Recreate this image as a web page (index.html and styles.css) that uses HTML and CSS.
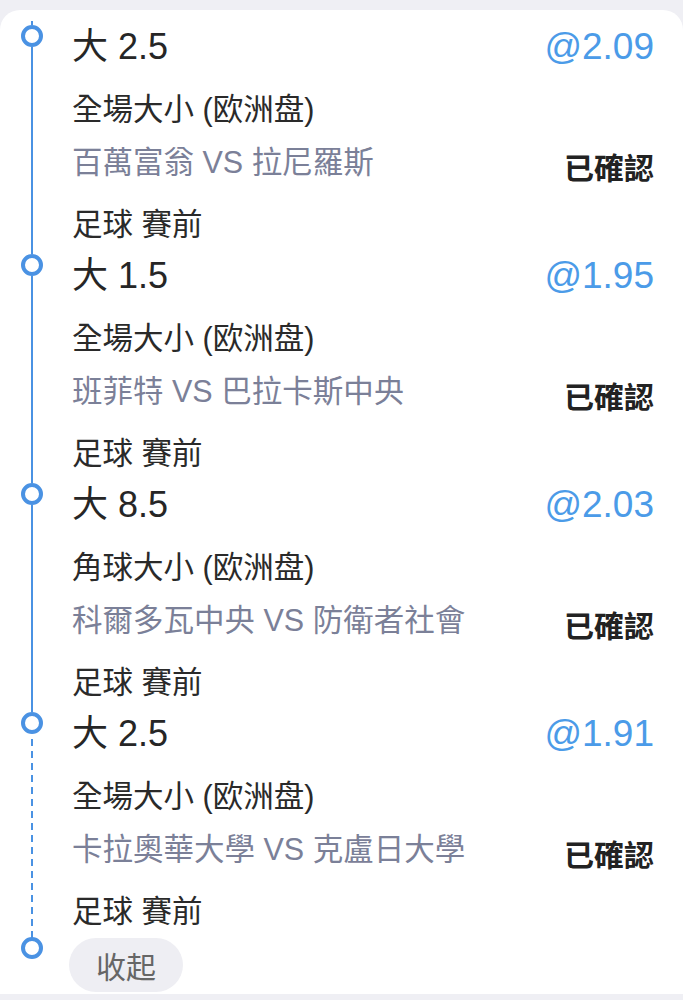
FILE: index.html
```html
<!DOCTYPE html>
<html lang="zh-Hant">
<head>
  <meta charset="UTF-8">
  <title>注單詳情</title>
  <meta name="viewport" content="width=device-width, initial-scale=1.0">
  <link rel="stylesheet" href="styles.css">
</head>
<body>

  <div class="card">

    <!-- bet legs -->
    <div class="leg">
      <div class="rail"><span class="dot"></span><span class="line"></span></div>
      <div class="leg-body">
        <div class="leg-head">
          <span class="pick">大 2.5</span>
          <span class="odds">@2.09</span>
        </div>
        <div class="market">全場大小 (欧洲盘)</div>
        <div class="match-row">
          <span class="teams">百萬富翁 VS 拉尼羅斯</span>
          <span class="status">已確認</span>
        </div>
        <div class="sport">足球 賽前</div>
      </div>
    </div>

    <div class="leg">
      <div class="rail"><span class="dot"></span><span class="line"></span></div>
      <div class="leg-body">
        <div class="leg-head">
          <span class="pick">大 1.5</span>
          <span class="odds">@1.95</span>
        </div>
        <div class="market">全場大小 (欧洲盘)</div>
        <div class="match-row">
          <span class="teams">班菲特 VS 巴拉卡斯中央</span>
          <span class="status">已確認</span>
        </div>
        <div class="sport">足球 賽前</div>
      </div>
    </div>

    <div class="leg">
      <div class="rail"><span class="dot"></span><span class="line"></span></div>
      <div class="leg-body">
        <div class="leg-head">
          <span class="pick">大 8.5</span>
          <span class="odds">@2.03</span>
        </div>
        <div class="market">角球大小 (欧洲盘)</div>
        <div class="match-row">
          <span class="teams">科爾多瓦中央 VS 防衛者社會</span>
          <span class="status">已確認</span>
        </div>
        <div class="sport">足球 賽前</div>
      </div>
    </div>

    <div class="leg leg-last">
      <div class="rail"><span class="dot"></span><span class="line dashed"></span></div>
      <div class="leg-body">
        <div class="leg-head">
          <span class="pick">大 2.5</span>
          <span class="odds">@1.91</span>
        </div>
        <div class="market">全場大小 (欧洲盘)</div>
        <div class="match-row">
          <span class="teams">卡拉奧華大學 VS 克盧日大學</span>
          <span class="status">已確認</span>
        </div>
        <div class="sport">足球 賽前</div>
      </div>
    </div>

    <!-- collapse -->
    <div class="leg-foot">
      <div class="rail"><span class="dot"></span></div>
      <button class="collapse" type="button">收起</button>
    </div>

  </div>

</body>
</html>
```

FILE: styles.css
```css
:root {
  --blue: #4a92e3;
  --odds: #4b9be8;
  --bg: #efeff4;
  --text: #222;
  --muted: #7b8098;
}
body {
  margin: 0;
  background: var(--bg);
  font-family: "Liberation Sans", "Noto Sans CJK TC", sans-serif;
  color: var(--text);
}
.card {
  margin-top: 10px;
  background: #fff;
  border-radius: 20px 20px 0 0;
  padding: 11px 29px 2px 21px;
}
.leg {
  display: flex;
  gap: 29px;
  padding-top: 4px;
  padding-bottom: 10px;
}
.leg + .leg {
  padding-top: 0;
}
.leg-last {
  padding-bottom: 6px;
}
.rail {
  width: 22px;
  flex: none;
  display: flex;
  flex-direction: column;
  align-items: center;
}
.leg .rail {
  margin-bottom: -10px;
}
.leg:first-child .rail::before {
  content: '';
  width: 2px;
  height: 4px;
  margin-top: -4px;
  background: var(--blue);
}
.dot {
  width: 14px;
  height: 14px;
  border: 4px solid var(--blue);
  border-radius: 50%;
  background: #fff;
  flex: none;
}
.line {
  width: 2px;
  flex: 1;
  background: var(--blue);
}
.line.dashed {
  margin-top: 5px;
  background: repeating-linear-gradient(to bottom, var(--blue) 0 7px, transparent 7px 12px);
}
.leg-body {
  flex: 1;
  min-width: 0;
}
.leg-head {
  display: flex;
  justify-content: space-between;
  align-items: center;
  height: 44px;
}
.pick {
  font-size: 36px;
  line-height: 44px;
  color: #262626;
}
.odds {
  font-size: 37px;
  line-height: 44px;
  color: var(--odds);
}
.market,
.sport,
.teams {
  font-size: 30.5px;
  line-height: 40px;
}
.market {
  margin-top: 20px;
  color: #2a2a2a;
}
.match-row {
  display: flex;
  justify-content: space-between;
  align-items: flex-start;
  margin-top: 13px;
}
.teams {
  color: var(--muted);
}
.status {
  font-size: 30px;
  line-height: 54px;
  font-weight: 700;
  color: #222;
}
.sport {
  margin-top: 8px;
  color: #2a2a2a;
}
.leg-foot {
  display: flex;
  gap: 26px;
  align-items: flex-start;
}
.collapse {
  margin-top: 1px;
  height: 54px;
  padding: 0 27px;
  border: none;
  border-radius: 27px;
  background: #eeeef3;
  color: #666;
  font-family: inherit;
  font-size: 30px;
  cursor: pointer;
}
```
